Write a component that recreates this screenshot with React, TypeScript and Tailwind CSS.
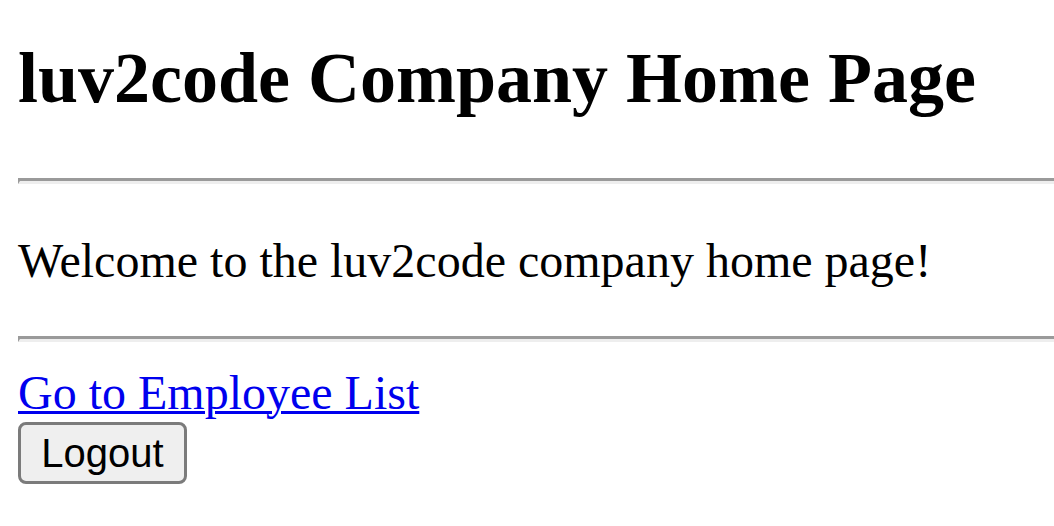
import React from 'react'

export default function App() {
  return (
    <div className="min-h-screen bg-white pl-[18px] font-['Liberation_Serif',serif] text-black">
      {/* page heading */}
      <h2 className="pt-[37px] text-[72px] font-bold leading-[83px] whitespace-nowrap">
        luv2code Company Home Page
      </h2>

      <hr className="mt-[58px] h-0 border-0 border-t-[3px] border-b-[3px] border-l-2 border-t-[#9a9a9a] border-b-[#eeeeee] border-l-[#9a9a9a]" />

      <p className="mt-[49px] text-[48px] leading-[55px] whitespace-nowrap">
        Welcome to the luv2code company home page!
      </p>

      <hr className="mt-[48px] h-0 border-0 border-t-[3px] border-b-[3px] border-l-2 border-t-[#9a9a9a] border-b-[#eeeeee] border-l-[#9a9a9a]" />

      <div className="mt-[23px] text-[48px] leading-[55px]">
        <a href="#" className="text-[#0000ee] underline decoration-[3px]">
          Go to Employee List
        </a>
      </div>

      <form className="mt-[2px]" onSubmit={(e) => e.preventDefault()}>
        <button
          type="submit"
          className="h-[62px] w-[169px] rounded-[8px] border-[3px] border-[#7b7b7b] bg-[#efefef] font-['Liberation_Sans',Arial,sans-serif] text-[40px] leading-[46px] text-black"
        >
          Logout
        </button>
      </form>
    </div>
  )
}
